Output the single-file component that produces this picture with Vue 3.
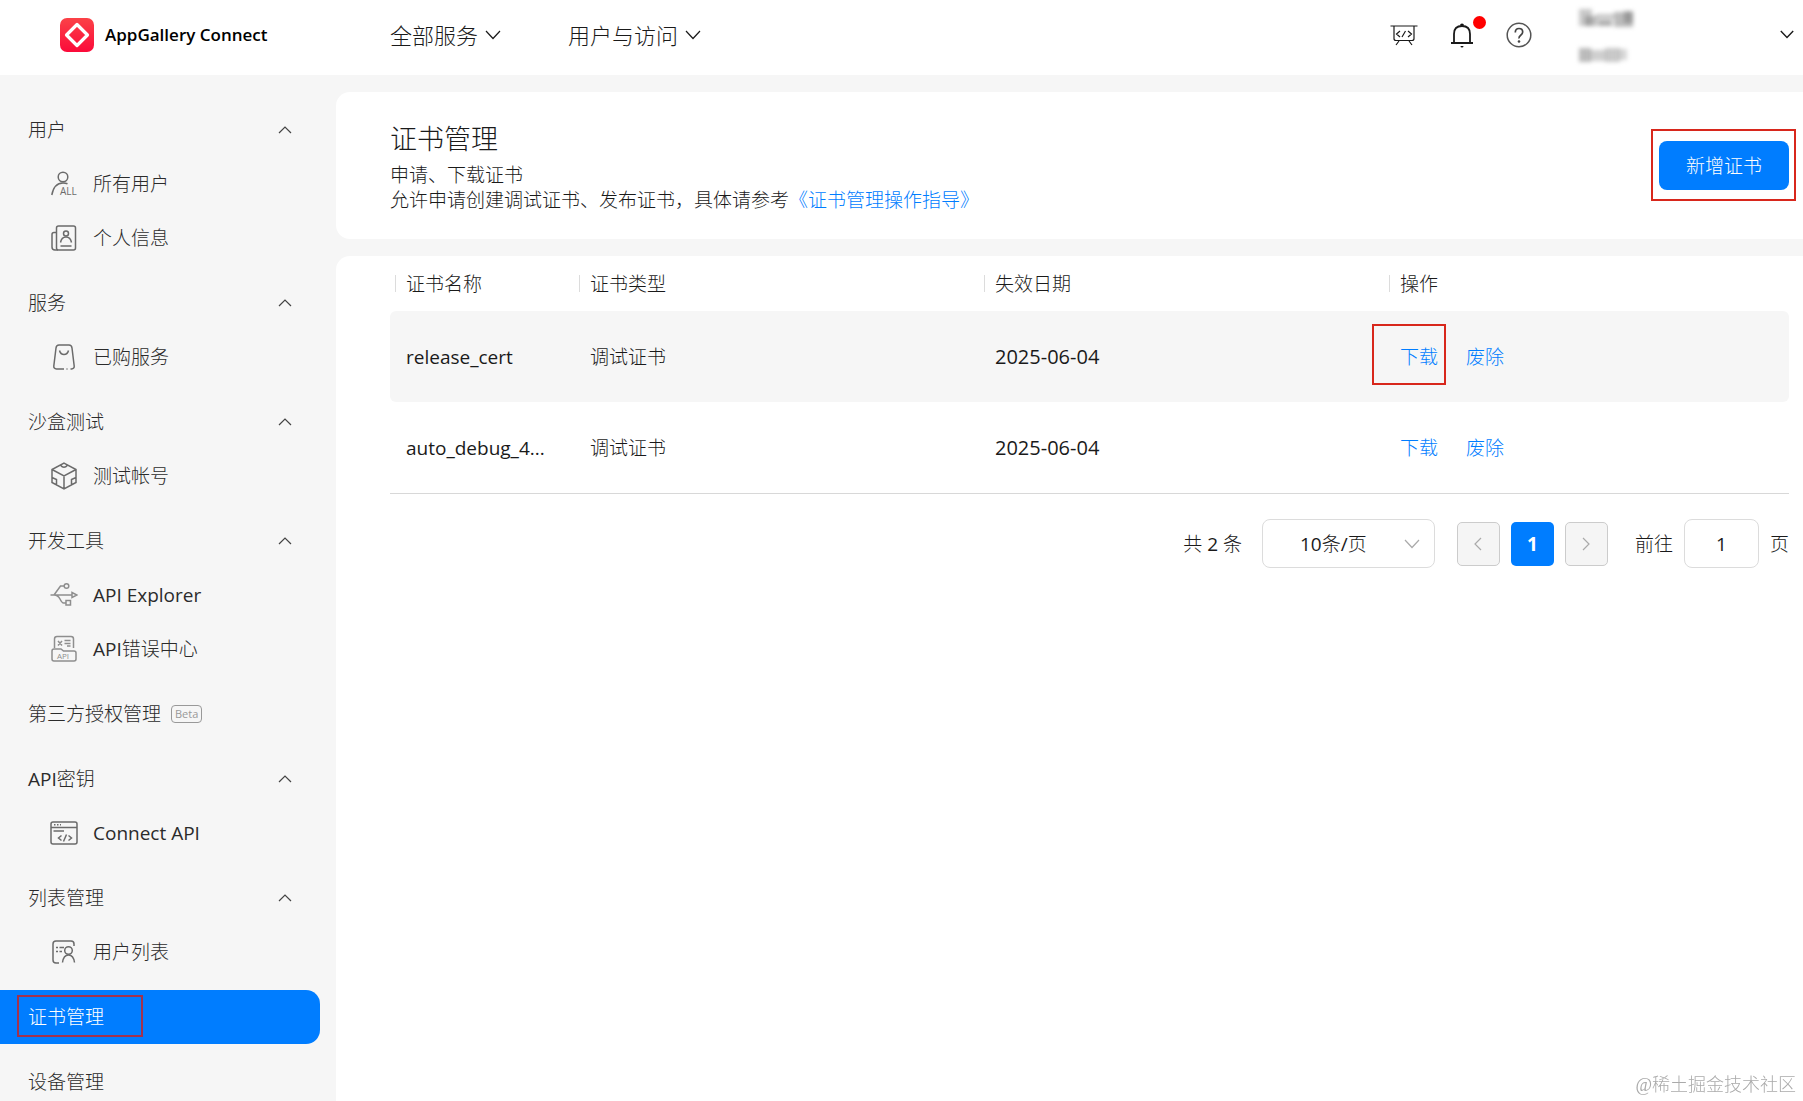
<script setup>
import { ref } from 'vue'

const groups = [
  {
    title: '用户',
    items: [
      { label: '所有用户', icon: 'users' },
      { label: '个人信息', icon: 'profile' },
    ],
  },
  { title: '服务', items: [{ label: '已购服务', icon: 'bag' }] },
  { title: '沙盒测试', items: [{ label: '测试帐号', icon: 'cube' }] },
  {
    title: '开发工具',
    items: [
      { label: 'API Explorer', icon: 'explorer' },
      { label: 'API错误中心', icon: 'errors' },
    ],
  },
  { title: '第三方授权管理', badge: 'Beta' },
  { title: 'API密钥', items: [{ label: 'Connect API', icon: 'window' }] },
  { title: '列表管理', items: [{ label: '用户列表', icon: 'list' }] },
  { title: '证书管理', active: true },
  { title: '设备管理' },
]

const columns = ['证书名称', '证书类型', '失效日期', '操作']
const rows = [
  { name: 'release_cert', type: '调试证书', date: '2025-06-04', marked: true },
  { name: 'auto_debug_4...', type: '调试证书', date: '2025-06-04' },
]

const pageSize = ref('10条/页')
const jumpTo = ref('1')
</script>

<template>
  <div class="app">
    <header class="topbar">
      <a class="brand" href="#">
        <svg class="logo" viewBox="0 0 34 34" aria-hidden="true">
          <defs>
            <linearGradient id="logo-bg" x1="0" y1="0" x2="0" y2="1">
              <stop offset="0" stop-color="#fb4247" />
              <stop offset="1" stop-color="#fb0a3a" />
            </linearGradient>
          </defs>
          <rect width="34" height="34" rx="7" fill="url(#logo-bg)" />
          <path d="M17 6.500 27.500 17 17 27.500 6.500 17Z" fill="none" stroke="#fff" stroke-width="3.200" stroke-linejoin="round" />
        </svg>
        <span>AppGallery Connect</span>
      </a>
      <nav class="topnav">
        <button type="button" v-for="label in ['全部服务', '用户与访问']" :key="label">
          {{ label }}
          <svg width="16" height="10" viewBox="0 0 16 10" aria-hidden="true"><path d="M1 1l7 7.500L15 1" /></svg>
        </button>
      </nav>
      <div class="tools">
        <button type="button" aria-label="开发者控制台">
          <svg width="28" height="24" viewBox="0 0 28 24"><path d="M.5 3h27M4 3v12.500q0 2 2 2h16q2 0 2-2V3M9 18l-3 4M19 18l3 4M10 8l-3.500 3 3.500 3M18 8l3.500 3-3.500 3M15.500 8l-3.500 6" /></svg>
        </button>
        <button type="button" class="bell" aria-label="通知">
          <svg width="24" height="26" viewBox="0 0 24 26"><path d="M4 21v-9q0-8 8-8t8 8v9" stroke-width="1.800" /><path d="M1 21h22" stroke-width="2" /><path d="M10 3.500a2 2 0 0 1 4 0ZM10.500 24a1.500 1.500 0 0 0 3 0Z" fill="#111" stroke="none" /></svg>
          <i class="dot"></i>
        </button>
        <button type="button" aria-label="帮助">
          <svg width="26" height="26" viewBox="0 0 26 26"><circle cx="13" cy="13" r="11.800" stroke="#555" stroke-width="1.500" /><path d="M9.300 10.500q0-4 3.700-4t3.700 3.500q0 1.800-2 3.200T13 16.500" stroke="#444" stroke-width="1.700" /><circle cx="13" cy="19.500" r="1.300" fill="#444" stroke="none" /></svg>
        </button>
        <button type="button" class="account" aria-label="帐户">
          <svg class="masked" width="62" height="60" viewBox="0 0 62 60">
            <g stroke="none" fill="#777">
              <rect x="1" y="4" width="13" height="17" opacity=".4" /><rect x="7" y="11" width="12" height="10" opacity=".5" />
              <rect x="18" y="9" width="18" height="5" opacity=".4" /><rect x="20" y="15" width="14" height="6" opacity=".6" />
              <rect x="36" y="7" width="19" height="15" opacity=".5" /><rect x="46" y="6" width="9" height="12" opacity=".5" />
              <rect x="1" y="43" width="12" height="14" opacity=".5" /><rect x="12" y="45" width="16" height="11" opacity=".35" />
              <rect x="27" y="43" width="15" height="14" opacity=".4" /><rect x="41" y="44" width="8" height="11" opacity=".3" />
            </g>
          </svg>
          <svg width="14" height="9" viewBox="0 0 14 9"><path d="M.8 1 7 7.500 13.200 1" stroke-width="1.400" /></svg>
        </button>
      </div>
    </header>

    <div class="body">
      <aside class="sidebar">
        <section v-for="g in groups" :key="g.title" class="group">
          <button v-if="g.items" type="button" class="row">
            {{ g.title }}
            <svg class="caret" width="14" height="8" viewBox="0 0 14 8" aria-hidden="true"><path d="M1 7l6-6 6 6" /></svg>
          </button>
          <a v-else href="#" class="row" :class="{ active: g.active }">
            <span>{{ g.title }}</span>
            <span v-if="g.badge" class="badge">{{ g.badge }}</span>
          </a>
          <a v-for="item in g.items" :key="item.label" href="#" class="row item">
            <svg class="icon" :class="item.icon" viewBox="0 0 28 28" aria-hidden="true">
              <template v-if="item.icon === 'users'">
                <circle cx="13" cy="7" r="4.800" /><path d="M1.800 25Q4 13 13 13q2.500 0 4.500.8" />
                <text x="10" y="25" font-size="10">ALL</text>
              </template>
              <template v-else-if="item.icon === 'profile'">
                <rect x="6.500" y="2" width="19" height="24" rx="2" /><path d="M6.500 8.500H4q-2 0-2 2V23q0 3 3 3h3M10.500 18.500q1-5.500 5.500-5.500t5.500 5.500M10.500 22h11" /><circle cx="16" cy="9.500" r="2.500" />
              </template>
              <template v-else-if="item.icon === 'bag'">
                <path d="M14 26H6.500q-3-.3-2.700-3L6 5q.4-3 3-3h10q2.600 0 3 3l2.200 18q.3 2.700-2.700 3h-1M16.500 26h1M9.500 7.500q1 4 4.500 4t4.500-4" />
              </template>
              <template v-else-if="item.icon === 'cube'">
                <path d="M14 1.200 26 7.500v13L14 27 2 20.500v-13ZM2 7.500l12 6.300 12-6.300M14 14v13M10.500 3.300q3.500 4 7 0M2 15.500l4.500 2v5.300M26 15.500l-4.500 2v5.300" />
              </template>
              <template v-else-if="item.icon === 'explorer'">
                <path d="M.5 14H22M4 14l6.500-9h3.500M4 14q4 0 6 4t3.500 4H16M22 11.500l5 2.500-5 2.500Z" /><circle cx="16.500" cy="5" r="2.300" /><rect x="16" y="19.500" width="4.500" height="4.500" />
              </template>
              <template v-else-if="item.icon === 'errors'">
                <path d="M4.500 13V4q0-2.500 2.500-2.500h14q2.500 0 2.500 2.500v9M2 16q0-2 2-2h7l2.500 2H24q2 0 2 2v6q0 2-2 2H4q-2 0-2-2ZM8 6l4 4.500M12 6l-4 4.500M14.500 5.500h6M14.500 8.500h6M17 11h3.500" />
                <text x="7" y="24" font-size="8">API</text>
              </template>
              <template v-else-if="item.icon === 'window'">
                <rect x="1" y="3" width="26" height="22" rx="2" /><path d="M1 8.500h26M3.500 12H14M11.500 16.500 8.500 19l3 2.500M18.500 16.500l3 2.500-3 2.500M16.500 15.500l-3 7" /><path d="M4 5.800h7" stroke-dasharray="1.500 1.500" />
              </template>
              <template v-else>
                <path d="M9 25H6q-3 0-3-3V6q0-3 3-3h15q3 0 3 3v2M6 9.500h2M9.500 9.500H14M6 13.500h2M9.500 13.500H12M12.500 24.500q1-7.500 6-7.500t6 7.500" /><circle cx="18.500" cy="12.500" r="3.800" />
              </template>
            </svg>
            {{ item.label }}
          </a>
        </section>
      </aside>

      <main class="main">
        <section class="card intro">
          <div>
            <h1>证书管理</h1>
            <p>申请、下载证书</p>
            <p>允许申请创建调试证书、发布证书，具体请参考<a href="#">《证书管理操作指导》</a></p>
          </div>
          <div class="marked-action">
            <button type="button" class="primary">新增证书</button>
          </div>
        </section>

        <section class="card content">
          <table>
            <colgroup>
              <col class="name" /><col /><col /><col />
            </colgroup>
            <thead>
              <tr>
                <th v-for="c in columns" :key="c" scope="col"><span>{{ c }}</span></th>
              </tr>
            </thead>
            <tbody>
              <tr v-for="r in rows" :key="r.name" :class="{ hovered: r.marked }">
                <td>{{ r.name }}</td>
                <td>{{ r.type }}</td>
                <td class="date">{{ r.date }}</td>
                <td>
                  <div class="actions">
                    <a href="#" :class="{ marked: r.marked }">下载</a>
                    <a href="#">废除</a>
                  </div>
                </td>
              </tr>
            </tbody>
          </table>

          <div class="pager">
            <span>共 2 条</span>
            <label class="size">
              <select v-model="pageSize" aria-label="每页条数">
                <option>10条/页</option>
                <option>20条/页</option>
              </select>
              <svg width="16" height="10" viewBox="0 0 16 10" aria-hidden="true"><path d="M1 1l7 7.500L15 1" /></svg>
            </label>
            <div class="pages">
              <button type="button" disabled aria-label="上一页">
                <svg width="8" height="14" viewBox="0 0 8 14"><path d="M7 1 1 7l6 6" /></svg>
              </button>
              <button type="button" class="current">1</button>
              <button type="button" disabled aria-label="下一页">
                <svg width="8" height="14" viewBox="0 0 8 14"><path d="M1 1l6 6-6 6" /></svg>
              </button>
            </div>
            <label class="jump">前往 <input v-model="jumpTo" type="text" /> 页</label>
          </div>
        </section>
      </main>
    </div>
    <div class="watermark">@稀土掘金技术社区</div>
  </div>
</template>

<style>
body {
  margin: 0;
  background: #f6f6f6;
}
</style>

<style scoped>
* {
  box-sizing: border-box;
}
.app {
  height: 100vh;
  display: flex;
  flex-direction: column;
  overflow: hidden;
  font: 19px/24px "Open Sans", "Noto Sans CJK SC Light", "Noto Sans CJK SC", sans-serif;
  color: #1a1a1a;
}
button,
select,
input {
  font: inherit;
  color: inherit;
  margin: 0;
}
button {
  border: 0;
  padding: 0;
  background: none;
  cursor: pointer;
}
a {
  color: #007dff;
  text-decoration: none;
}
svg {
  display: block;
  flex: none;
  fill: none;
  stroke: #1a1a1a;
  stroke-width: 1.2;
}

/* top bar */
.topbar {
  flex: none;
  height: 75px;
  padding: 0 9px 6px 60px;
  display: flex;
  align-items: center;
  background: #fff;
}
.brand {
  width: 330px;
  display: flex;
  align-items: center;
  gap: 11px;
  color: #000;
  font-size: 17px;
  font-weight: 600;
}
.logo {
  width: 34px;
  height: 34px;
  stroke: none;
}
.topnav {
  display: flex;
  gap: 67px;
  font-size: 22px;
}
.topnav button {
  display: flex;
  align-items: center;
  gap: 7px;
}
.tools {
  margin-left: auto;
  display: flex;
  align-items: center;
  gap: 32px;
}
.bell {
  position: relative;
}
.dot {
  position: absolute;
  top: -6px;
  right: -12px;
  width: 13px;
  height: 13px;
  border-radius: 50%;
  background: #f00;
}
.account {
  width: 216px;
  margin-left: 14px;
  display: flex;
  align-items: center;
  justify-content: space-between;
}
.masked {
  filter: blur(2px);
}

/* side navigation */
.body {
  flex: 1;
  min-height: 0;
  display: flex;
}
.sidebar {
  flex: none;
  width: 336px;
  padding: 28px 16px 0 0;
  overflow-y: auto;
  scrollbar-width: none;
}
.group {
  margin-bottom: 11px;
}
.row {
  width: 100%;
  height: 54px;
  padding: 0 28px;
  display: flex;
  align-items: center;
  color: #2b2b2b;
}
.caret {
  margin-left: auto;
  stroke: #444;
}
.item {
  padding-left: 50px;
  gap: 15px;
}
.icon {
  width: 28px;
  height: 28px;
  stroke: #6b6b6b;
  stroke-width: 1.5;
}
.icon text {
  fill: #6b6b6b;
  stroke: none;
}
.icon.explorer,
.icon.errors {
  stroke: #8e8e8e;
}
.icon.errors text {
  fill: #8e8e8e;
}
.badge {
  margin-left: 10px;
  padding: 0 3px;
  border: 1px solid #999;
  border-radius: 4px;
  color: #999;
  font-size: 11px;
  line-height: 16px;
}
.active {
  position: relative;
  border-radius: 0 14px 14px 0;
  background: #007dff;
  color: #fff;
}
.active::after {
  content: "";
  position: absolute;
  left: 17px;
  top: 5px;
  width: 122px;
  height: 38px;
  border: 2px solid #a2324d;
}

/* content */
.main {
  flex: 1;
  min-width: 0;
  padding-top: 17px;
  display: flex;
  flex-direction: column;
  gap: 17px;
}
.card {
  background: #fff;
  border-radius: 14px 0 0 14px;
}
.intro {
  height: 147px;
  padding: 29px 14px 0 54px;
  display: flex;
  justify-content: space-between;
}
h1 {
  margin: 0 0 6px;
  font-size: 27px;
  line-height: 36px;
  font-weight: 400;
}
p {
  margin: 0;
  line-height: 25px;
}
.marked-action {
  position: relative;
  align-self: flex-start;
  margin-top: 20px;
}
.marked-action::after {
  content: "";
  position: absolute;
  inset: -12px -7px -11px -8px;
  border: 2px solid #d8271c;
  pointer-events: none;
}
.primary {
  width: 130px;
  height: 49px;
  border-radius: 8px;
  background: #007dff;
  color: #fff;
  display: block;
}
.content {
  flex: 1;
  border-radius: 14px 0 0 0;
  padding: 0 14px 0 54px;
}
table {
  width: 100%;
  table-layout: fixed;
  border-collapse: separate;
  border-spacing: 0;
  border-bottom: 1px solid #d8d8d8;
}
col.name {
  width: 184px;
}
th {
  height: 55px;
  padding: 0 0 0 5px;
  font-weight: 400;
  text-align: left;
}
th span {
  display: flex;
  align-items: center;
}
th span::before {
  content: "";
  width: 1px;
  height: 17px;
  margin-right: 10px;
  background: #dcdcdc;
}
td {
  height: 91px;
  padding: 0 0 0 16px;
  white-space: nowrap;
}
.date {
  font-size: 20px;
}
.hovered td {
  background: #f6f6f6;
}
.hovered td:first-child {
  border-radius: 6px 0 0 6px;
}
.hovered td:last-child {
  border-radius: 0 6px 6px 0;
}
.actions {
  display: flex;
  gap: 28px;
}
.marked {
  position: relative;
}
.marked::after {
  content: "";
  position: absolute;
  inset: -21px -8px -16px -28px;
  border: 2px solid #d8271c;
}

/* pagination */
.pager {
  margin-top: 25px;
  display: flex;
  align-items: center;
  justify-content: flex-end;
}
.size {
  position: relative;
  margin: 0 22px 0 20px;
}
.size select {
  appearance: none;
  display: block;
  width: 173px;
  height: 49px;
  padding: 0 37px;
  border: 1px solid #dcdcdc;
  border-radius: 8px;
  background: #fff;
}
.size svg {
  position: absolute;
  right: 15px;
  top: 20px;
  stroke: #aaa;
  pointer-events: none;
}
.pages {
  display: flex;
  gap: 11px;
}
.pages button {
  width: 43px;
  height: 44px;
  display: flex;
  align-items: center;
  justify-content: center;
  border: 1px solid #ccc;
  border-radius: 5px;
  background: #f5f5f5;
}
.pages svg {
  stroke: #aaa;
}
.pages .current {
  border: 0;
  background: #007dff;
  color: #fff;
  font-weight: 700;
}
.jump {
  margin-left: 27px;
  display: flex;
  align-items: center;
  gap: 11px;
}
.jump input {
  width: 75px;
  height: 49px;
  border: 1px solid #dcdcdc;
  border-radius: 8px;
  background: #fff;
  text-align: center;
}
.watermark {
  position: fixed;
  right: 7px;
  bottom: 4px;
  color: #aaa;
  font: 18px/24px "Liberation Serif", "Noto Sans CJK SC Light", "Noto Sans CJK SC", serif;
}
</style>
